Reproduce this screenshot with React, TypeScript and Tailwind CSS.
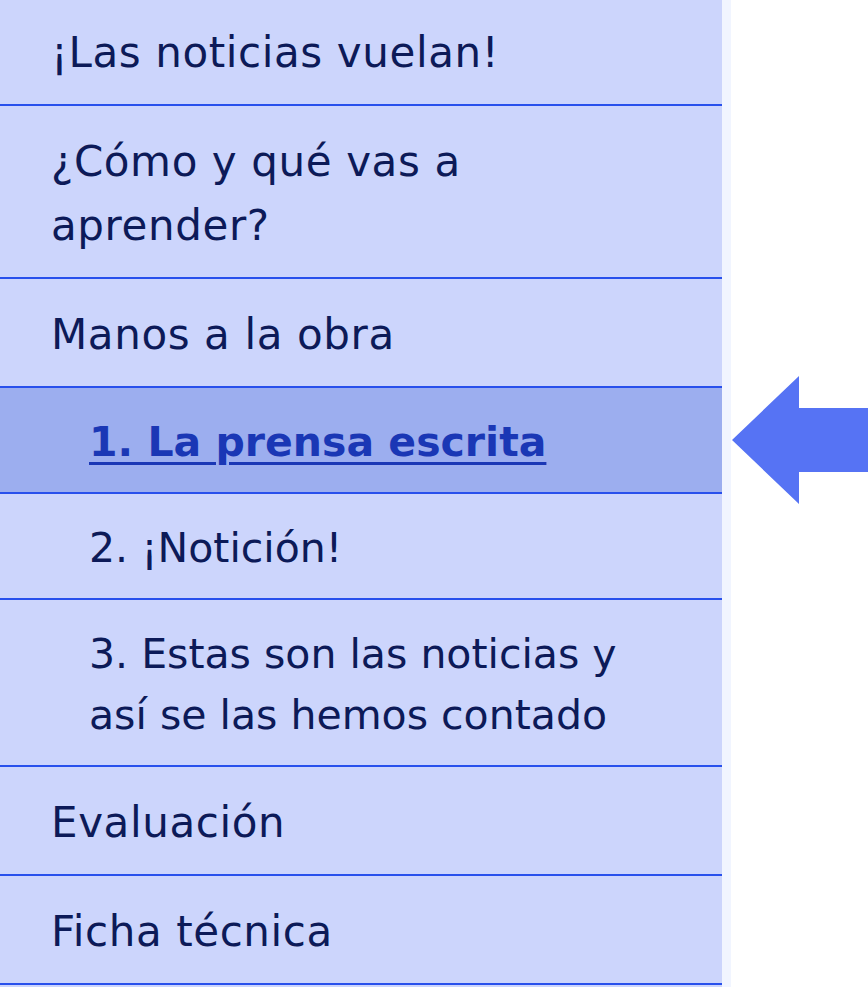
const items = [
  { label: "¡Las noticias vuelan!", sub: false },
  { label: "¿Cómo y qué vas a aprender?", sub: false },
  { label: "Manos a la obra", sub: false },
  { label: "1. La prensa escrita", sub: true, active: true },
  { label: "2. ¡Notición!", sub: true },
  { label: "3. Estas son las noticias y así se las hemos contado", sub: true },
  { label: "Evaluación", sub: false },
  { label: "Ficha técnica", sub: false },
];

function Arrow() {
  return (
    <svg
      className="absolute left-[732px] top-[-12px]"
      width="140"
      height="129"
      viewBox="0 0 140 129"
    >
      <polygon points="0,64 67,0 67,32 140,32 140,96 67,96 67,128" fill="#5673f4" />
    </svg>
  );
}

export default function App() {
  return (
    <div
      className="flex w-[868px] h-[987px] overflow-hidden bg-white"
      style={{ fontFamily: '"DejaVu Sans", Verdana, sans-serif' }}
    >
      <nav className="w-[722px] shrink-0 bg-[#ccd5fc] -mt-[3px]">
        {items.map((it) => (
          <div
            key={it.label}
            className={`relative border-b-2 border-[#2850ec] pr-[80px] pt-[24px] pb-[19px] ${
              it.sub
                ? "pl-[89px] text-[41px] leading-[61px]"
                : "pl-[51px] text-[42px] leading-[64px] tracking-[0.6px]"
            } ${it.active ? "bg-[#9caeef]" : ""}`}
          >
            {it.active ? (
              <a className="font-bold text-[#1a37b5] underline underline-offset-[6px] decoration-[3px]">
                {it.label}
              </a>
            ) : (
              <span className="text-[#0c1a58]">{it.label}</span>
            )}
            {it.active && <Arrow />}
          </div>
        ))}
      </nav>
      <div className="w-[9px] shrink-0 bg-[#f1f5ff]" />
      <div className="flex-1" />
    </div>
  );
}
